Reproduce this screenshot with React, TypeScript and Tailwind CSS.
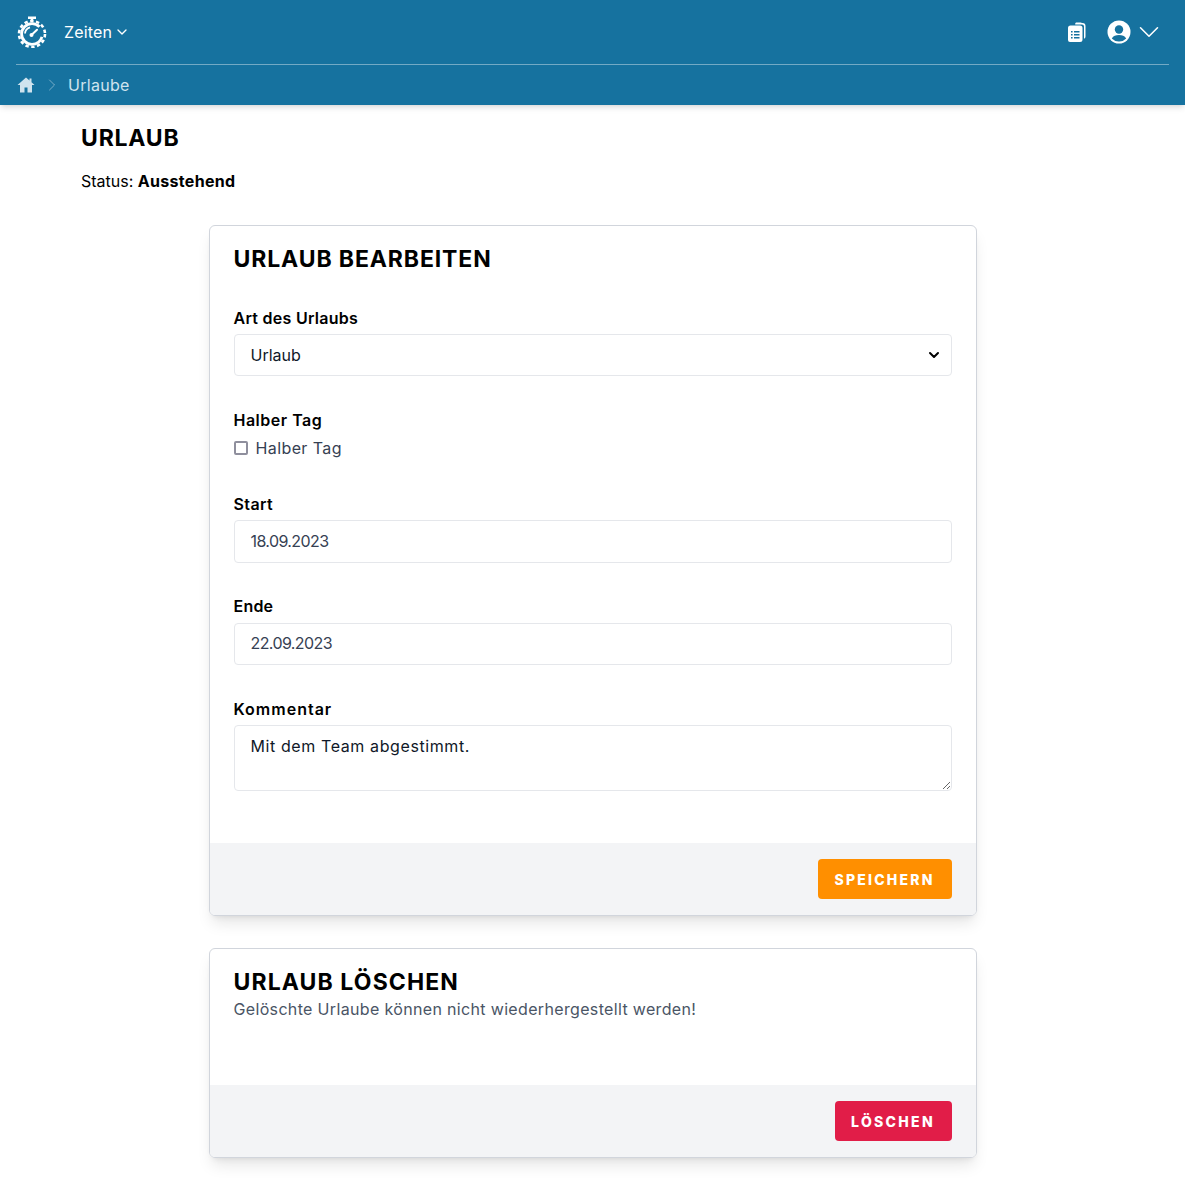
import React from 'react';
import { ChevronDown, ChevronRight } from 'lucide-react';

const font = "font-['Inter',sans-serif]";

const LogoIcon = () => (
  <svg width="30" height="32" viewBox="0 0 30 32" fill="none" stroke="white">
    <path d="M11 1.800h8M15 2v4" strokeWidth="2.400" />
    <circle cx="15" cy="18" r="10.400" strokeWidth="2.800" strokeDasharray="54 11.400" strokeDashoffset="-3" />
    <circle cx="15" cy="18" r="13" strokeWidth="2.600" strokeDasharray="3.400 2.500" />
    <path d="M15.500 18l4.500-4.300" strokeWidth="2" strokeLinecap="round" />
    <circle cx="14.500" cy="19" r="2" fill="white" stroke="none" />
    <path d="M8 17.500a7 7 0 0 1 5-6.200" strokeWidth="1.800" />
  </svg>
);

const CopyListIcon = () => (
  <svg width="20" height="22" viewBox="0 0 20 22" fill="white">
    <path d="M9 1.500h4.500a3 3 0 0 1 1.600.5h.4a3 3 0 0 1 3 3v10.500a2.500 2.500 0 0 1-1.500 2.300V5.500a2 2 0 0 0-2-2H8.200A2 2 0 0 1 9 1.500z" />
    <path d="M3.500 4.500h9.500a2.500 2.500 0 0 1 2.500 2.500v11.500a2.500 2.500 0 0 1-2.500 2.500H3a2 2 0 0 1-2-2V7a2.500 2.500 0 0 1 2.500-2.500z" />
    <path d="M4 10h1.600v1.600H4zM7 10h5.500v1.600H7zM4 13h1.600v1.600H4zM7 13h5.500v1.600H7zM4 16h1.600v1.600H4zM7 16h5.500v1.600H7z" fill="#16729f" />
  </svg>
);

const UserIcon = () => (
  <svg width="24" height="24" viewBox="0 0 24 24">
    <circle cx="12" cy="12" r="11.500" fill="white" />
    <circle cx="12" cy="9.500" r="4.200" fill="#16729f" />
    <path d="M4.800 18.500c1.500-2.700 4-3.500 7.200-3.500s5.700.8 7.200 3.500A9.500 9.500 0 0 1 12 21.500a9.500 9.500 0 0 1-7.200-3z" fill="#16729f" />
  </svg>
);

const HomeIcon = () => (
  <svg width="18" height="16" viewBox="0 0 18 16" fill="#cfe3ee">
    <path d="M9 .5L.5 8h2.500v7.500h4.500V10.500h3V15.500H15V8h2.500L14.500 5.300V1.500h-2v2L9 .5z" />
  </svg>
);

const inputClass =
  'block w-full rounded border border-gray-200 bg-white px-4 text-base text-gray-700 flex items-center';

export default function App() {
  return (
    <div className={`${font} min-h-[1182px] bg-white text-black`}>
      <header className="bg-[#16729f] shadow-md h-[105px] text-white">
        <div className="mx-4 h-[65px] border-b border-white/40 flex items-center justify-between">
          <div className="flex items-center">
            <span className="ml-[1px]"><LogoIcon /></span>
            <span className="ml-[17px] text-base tracking-[0.01em]">Zeiten</span>
            <ChevronDown size={16} className="ml-[2px]" />
          </div>
          <div className="flex items-center">
            <span><CopyListIcon /></span>
            <span className="ml-[20px]"><UserIcon /></span>
            <ChevronDown size={34} strokeWidth={1.1} className="ml-[1px] mr-[3px]" />
          </div>
        </div>
        <div className="mx-4 h-[40px] flex items-center text-[#cfe3ee]">
          <span className="ml-[1px]"><HomeIcon /></span>
          <ChevronRight size={20} strokeWidth={1} className="ml-[7px] text-white/50" />
          <span className="ml-[6px] text-base tracking-[0.3px]">Urlaube</span>
        </div>
      </header>

      <main className="pl-[81px] pt-[18px]">
        <h1 className="text-[23px] font-bold tracking-[0.8px] leading-[30px]">URLAUB</h1>
        <p className="mt-[16px] text-base leading-[24px]">
          Status: <strong className="font-bold tracking-[0.3px]">Ausstehend</strong>
        </p>
      </main>

      <div className="mx-auto mt-[32px] w-[768px]">
        <section className="rounded-md border border-gray-300 shadow-lg overflow-hidden">
          <div className="px-6 pt-[17px] pb-[52px]">
            <h2 className="text-[23px] font-bold tracking-[0.88px] leading-[32px]">URLAUB BEARBEITEN</h2>

            <label className="block mt-[31px] font-semibold text-base leading-[24px] tracking-[0.27px]">Art des Urlaubs</label>
            <div className={`${inputClass} mt-[4px] h-[42px] justify-between text-gray-900`}>
              <span>Urlaub</span>
              <ChevronDown size={16} strokeWidth={3} className="-mr-[7px] text-black" />
            </div>

            <label className="block mt-[32px] font-semibold text-base leading-[24px] tracking-[0.5px]">Halber Tag</label>
            <div className="mt-[4px] h-[24px] flex items-center text-gray-700">
              <span className="h-[14px] w-[14px] rounded-[2px] border-2 border-[#8f8f9d] bg-white" />
              <span className="ml-[8px] tracking-[0.4px]">Halber Tag</span>
            </div>

            <label className="block mt-[32px] font-semibold text-base leading-[24px] tracking-[0.4px]">Start</label>
            <div className={`${inputClass} mt-[4px] h-[43px] pb-[2px] tracking-[-0.6px]`}>18.09.2023</div>

            <label className="block mt-[31px] font-semibold text-base leading-[24px] tracking-[0.2px]">Ende</label>
            <div className={`${inputClass} mt-[5px] h-[42px] pb-[2px] tracking-[-0.6px]`}>22.09.2023</div>

            <label className="block mt-[32px] font-semibold text-base leading-[24px] tracking-[1px]">Kommentar</label>
            <textarea
              readOnly
              defaultValue="Mit dem Team abgestimmt."
              className="block w-full h-[66px] mt-[4px] rounded border border-gray-200 px-4 py-[8px] text-base text-gray-900 tracking-[0.6px] outline-none"
            />
          </div>
          <div className="h-[72px] bg-gray-100 flex items-center justify-end px-6">
            <button className="h-[40px] w-[134px] pt-[1px] rounded bg-[#ff8f00] text-white text-sm font-extrabold tracking-[2.2px]">
              SPEICHERN
            </button>
          </div>
        </section>

        <section className="mt-[32px] rounded-md border border-gray-300 shadow-lg overflow-hidden">
          <div className="px-6 pt-[17px] h-[136px]">
            <h2 className="text-[23px] font-bold tracking-[1.1px] leading-[32px]">URLAUB LÖSCHEN</h2>
            <p className="-mt-[1px] text-base text-gray-600 leading-[24px] tracking-[0.34px]">Gelöschte Urlaube können nicht wiederhergestellt werden!</p>
          </div>
          <div className="h-[72px] bg-gray-100 flex items-center justify-end px-6">
            <button className="h-[40px] w-[117px] pt-[1px] rounded bg-[#e11d48] text-white text-sm font-extrabold tracking-[2.3px]">
              LÖSCHEN
            </button>
          </div>
        </section>
      </div>
    </div>
  );
}
